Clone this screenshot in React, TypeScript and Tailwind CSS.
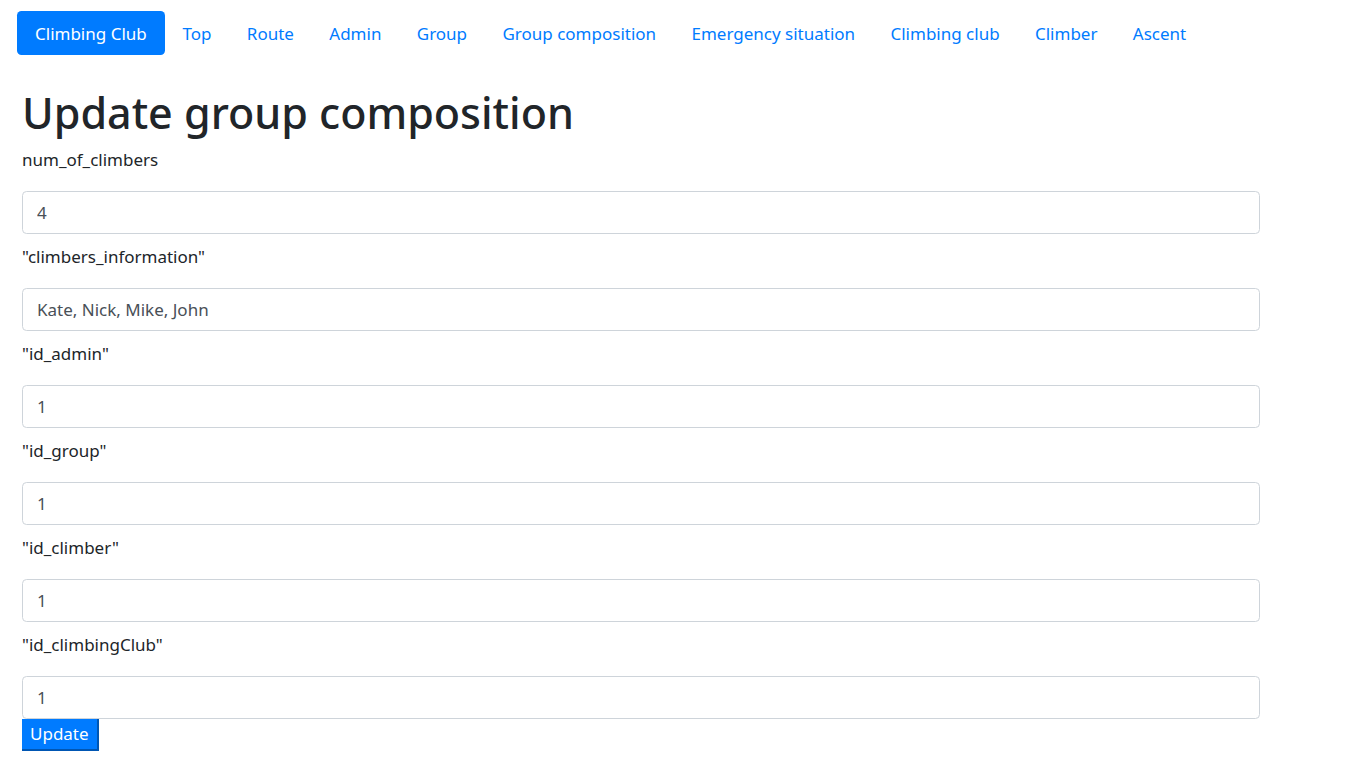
import React from 'react';

const links = ['Top', 'Route', 'Admin', 'Group', 'Group composition', 'Emergency situation', 'Climbing club', 'Climber', 'Ascent'];

const fields = [
  { label: 'num_of_climbers', value: '4' },
  { label: '"climbers_information"', value: 'Kate, Nick, Mike, John' },
  { label: '"id_admin"', value: '1' },
  { label: '"id_group"', value: '1' },
  { label: '"id_climber"', value: '1' },
  { label: '"id_climbingClub"', value: '1' },
];

export default function App() {
  return (
    <div className="min-h-screen bg-white text-[#212529]" style={{ fontFamily: '"Noto Sans", "Open Sans", sans-serif' }}>
      <nav className="flex items-center pl-[17px] pt-[11px]">
        <a className="block h-[44px] rounded-[4.5px] bg-[#007bff] px-[18px] pt-[1px] text-[17px] leading-[43px] text-white">Climbing Club</a>
        {links.map((l) => (
          <a key={l} className="block h-[44px] px-[17.7px] pt-[1px] text-[17px] leading-[43px] text-[#007bff]">{l}</a>
        ))}
      </nav>

      <div className="w-[1238px] pl-[22px]">
        <h1 className="mt-[31px] h-[54px] text-[43px] font-medium leading-[54px]">Update group composition</h1>
        {fields.map((f, i) => (
          <div key={f.label}>
            <label className={`block h-[27px] text-[17px] leading-[27px] ${i === 0 ? 'mt-[6px]' : 'mt-[9px]'} mb-[18px]`}>{f.label}</label>
            <input
              readOnly
              value={f.value}
              className="block h-[43px] w-[1238px] rounded-[4.5px] border border-[#ced4da] bg-white px-[14px] text-[17px] text-[#495057] outline-none"
            />
          </div>
        ))}
        <button className="block h-[32px] border-b-2 border-r-2 border-[#0056b3] bg-[#007bff] px-[8px] text-[17px] leading-[30px] text-white">Update</button>
      </div>
    </div>
  );
}
